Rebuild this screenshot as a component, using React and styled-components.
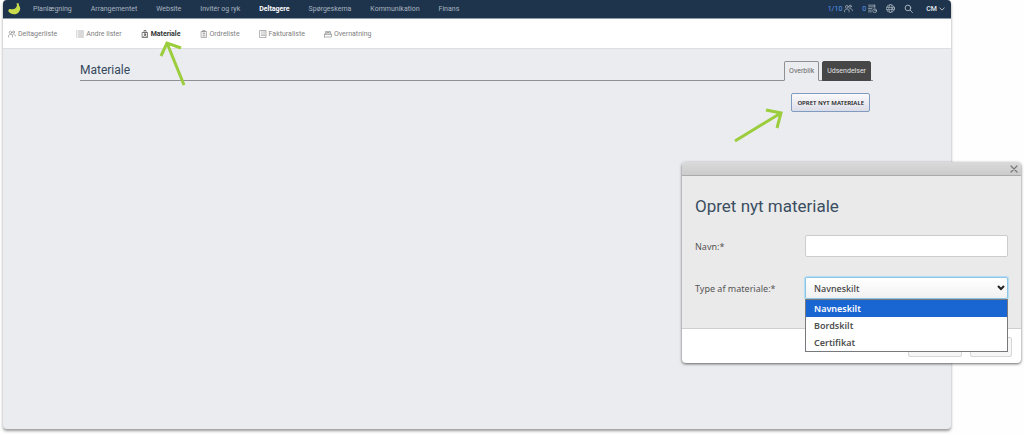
import { useState } from "react";
import styled, { createGlobalStyle } from "styled-components";

const GlobalStyle = createGlobalStyle`
  * {
    box-sizing: border-box;
  }

  body {
    margin: 0;
    background: #fefefe;
    font-family: Roboto, "Liberation Sans", sans-serif;
    color: #3c4650;
  }

  button, input, select {
    font: inherit;
    color: inherit;
  }
`;

const Stage = styled.div`
  position: relative;
  display: flex;
  min-height: 100vh;
  padding: 0 73px 6px 3px;
`;

const AppWindow = styled.div`
  display: flex;
  flex-direction: column;
  flex: 1;
  min-width: 0;
  overflow: hidden;
  background: #ebecf0;
  border-radius: 4px;
  box-shadow: 0 2px 3px rgba(0, 0, 0, 0.4);
`;

const TopBar = styled.header`
  display: flex;
  align-items: center;
  justify-content: space-between;
  height: 19px;
  padding: 0 6px 1px 5px;
  background: #1e344c;
  border-bottom: 1px solid #8d9cab;
  font-size: 7px;
  line-height: 10px;
`;

const MainNav = styled.nav`
  display: flex;
  align-items: center;
  gap: 19px;
`;

const Brand = styled.a`
  display: flex;
  padding-right: 1px;
  margin-right: -8px;
`;

const NavLink = styled.a`
  color: ${({ $active }) => ($active ? "#ffffff" : "#a9b4c0")};
  font-weight: ${({ $active }) => ($active ? 700 : 400)};
  text-decoration: none;
  white-space: nowrap;
`;

const Tools = styled.div`
  display: flex;
  align-items: center;
  gap: 9px;
  color: #b5bfca;
`;

const ToolButton = styled.button`
  display: flex;
  align-items: center;
  gap: 2px;
  padding: 0;
  border: 0;
  background: none;
  color: inherit;
`;

const Count = styled.span`
  color: #5c98f2;
`;

const UserButton = styled(ToolButton)`
  margin-left: 4px;
  font-weight: 500;
  color: #e3e7ec;
`;

const SubNav = styled.nav`
  display: flex;
  align-items: center;
  gap: 19px;
  height: 30px;
  padding: 0 5px;
  background: #ffffff;
  border-bottom: 1px solid #dcdee0;
  font-size: 7px;
  line-height: 10px;
`;

const SubNavLink = styled.a`
  display: flex;
  align-items: center;
  gap: 2px;
  color: ${({ $active }) => ($active ? "#333333" : "#808080")};
  font-weight: ${({ $active }) => ($active ? 700 : 400)};
  text-decoration: none;
  white-space: nowrap;
`;

const Content = styled.main`
  padding: 12px 78px 20px 77px;
`;

const Heading = styled.div`
  display: flex;
  align-items: flex-end;
  justify-content: space-between;
  padding-right: 2px;
  border-bottom: 1px solid #8e9094;
`;

const PageTitle = styled.h1`
  margin: 0 0 3px;
  font-size: 12px;
  font-weight: 400;
  line-height: 14px;
  color: #34495c;
`;

const Tabs = styled.div`
  display: flex;
  gap: 3px;
  margin-bottom: -1px;
`;

const Tab = styled.button`
  height: 20px;
  padding: 0 4px;
  border: 1px solid ${({ $active }) => ($active ? "#8e9094" : "#474747")};
  border-bottom-color: ${({ $active }) => ($active ? "#ebecf0" : "#474747")};
  border-radius: 2px 2px 0 0;
  background: ${({ $active }) => ($active ? "#ebecf0" : "#474747")};
  color: ${({ $active }) => ($active ? "#666666" : "#e4e4e4")};
  font-size: 7px;
`;

const Actions = styled.div`
  display: flex;
  justify-content: flex-end;
  padding: 12px 3px 0 0;
`;

const CreateButton = styled.button`
  height: 19px;
  padding: 0 5px;
  border: 1px solid #7f9cc0;
  border-radius: 2px;
  background: linear-gradient(#fafafc, #dcdce8);
  color: #222222;
  font-family: "Noto Sans", sans-serif;
  font-size: 6px;
  font-weight: 600;
`;

const Arrow = styled.svg`
  position: absolute;
  left: ${({ $left }) => $left}px;
  top: ${({ $top }) => $top}px;
  fill: none;
  stroke: #9bcd3c;
  stroke-width: 3;
  pointer-events: none;
`;

const RightArrow = styled(Arrow)`
  left: auto;
  right: 240px;
`;

const Dialog = styled.section`
  position: absolute;
  top: 162px;
  right: 3px;
  width: 339px;
  border-radius: 4px;
  background: #ffffff;
  box-shadow: 0 1px 3px rgba(0, 0, 0, 0.6);
  font-family: "Noto Sans", sans-serif;
`;

const DialogBar = styled.header`
  display: flex;
  align-items: center;
  justify-content: flex-end;
  height: 14px;
  padding-right: 3px;
  border-bottom: 1px solid #aaaaaa;
  border-radius: 4px 4px 0 0;
  background: linear-gradient(#dadada, #cbcbcb);
`;

const CloseButton = styled.button`
  display: flex;
  padding: 0;
  border: 0;
  background: none;
  color: #777777;
`;

const DialogForm = styled.form`
  padding: 18px 13px 29px;
  background: #eaeaea;
  border-bottom: 1px solid #cfcfcf;
`;

const DialogTitle = styled.h2`
  margin: 0 0 17px;
  font-family: Roboto, sans-serif;
  font-size: 17px;
  font-weight: 400;
  line-height: 24px;
  color: #3b4e61;
`;

const Field = styled.div`
  display: grid;
  grid-template-columns: 110px 1fr;
  align-items: center;
  font-size: 9px;

  & + & {
    margin-top: 20px;
  }
`;

const Label = styled.label`
  color: #555555;
`;

const TextInput = styled.input`
  width: 100%;
  height: 22px;
  padding: 0 9px;
  border: 1px solid #cccccc;
  border-radius: 2px;
  background: #ffffff;
  outline: none;
`;

const SelectWrap = styled.div`
  position: relative;
`;

const Select = styled.select`
  display: block;
  width: 100%;
  height: 22px;
  padding: 0 8px;
  appearance: none;
  border: 1px solid #8cc4e6;
  border-radius: 2px;
  background: linear-gradient(#ffffff, #f1f1f1);
  box-shadow: 0 0 1px 1px #b4dcf2;
  color: #444444;
  font-weight: 500;
  outline: none;
`;

const SelectChevron = styled.svg`
  position: absolute;
  right: 3px;
  top: 8px;
  fill: none;
  stroke: #222222;
  stroke-width: 2;
  pointer-events: none;
`;

const OptionList = styled.ul`
  position: absolute;
  top: 100%;
  left: 0;
  right: 0;
  z-index: 1;
  margin: 0;
  padding: 0;
  border: 1px solid #77797c;
  background: #ffffff;
  list-style: none;
`;

const Option = styled.li`
  padding: 0 8px;
  background: ${({ $selected }) => ($selected ? "#1965d2" : "#ffffff")};
  color: ${({ $selected }) => ($selected ? "#ffffff" : "#505050")};
  font-weight: 600;
  line-height: 17px;
  cursor: default;
`;

const DialogFooter = styled.footer`
  display: flex;
  justify-content: flex-end;
  gap: 8px;
  padding: 8px 9px 6px;
`;

const FooterButton = styled.button`
  height: 20px;
  width: ${({ $wide }) => ($wide ? 54 : 42)}px;
  padding: 0;
  border: 1px solid #d6d6d6;
  border-radius: 2px;
  background: #f6f6f6;
  color: #555555;
  font-size: 8px;
`;

const Icon = styled.svg`
  display: block;
  flex: none;
  fill: none;
  stroke: currentColor;
  stroke-width: ${({ $stroke }) => $stroke || 1.2};
  stroke-linecap: round;
  stroke-linejoin: round;
`;

function Logo() {
  return (
    <svg width="13" height="13" viewBox="0 0 26 26">
      <path
        d="M17 3L21 2L22 7C26 11 25 18 20 22C14 27 4 24 1 19C0 16 2 14 5 14C11 16 17 13 18 7Z"
        fill="#c9dc4b"
      />
    </svg>
  );
}

const icons = {
  people: (
    <>
      <circle cx="5" cy="5" r="2.5" />
      <circle cx="11" cy="4" r="2" />
      <path d="M1 14v-2c0-4 8-4 8 0v2M9 9c2-2 6-1 6 3" />
    </>
  ),
  list: (
    <path d="M5 2h10M5 6h10M5 10h10M5 14h10M1 2h1M1 6h1M1 10h1M1 14h1" />
  ),
  badge: (
    <>
      <path d="M3 5h10v10H3zM6 5V1h4v4M5 13c0-3 6-3 6 0" />
      <circle cx="8" cy="8.5" r="1.5" />
    </>
  ),
  clipboard: (
    <path d="M3 3h10v12H3zM6 1h4v3H6zM6 7h4M6 10h4M6 12h4" />
  ),
  invoice: <path d="M2 1h12v14H2zM5 4h2M9 4h3M5 8h2M9 8h3M5 11h2M9 11h3" />,
  bed: <path d="M1 14V9h14v5H1M1 9l2-3h10l2 3M3 6V3h10v3M5 6l1-1h4l1 1" />,
  orders: (
    <>
      <path d="M1 2h11M1 5h11M1 8h6M1 11h5M1 14h5M12 2v4" />
      <circle cx="12" cy="12" r="3.5" />
      <path d="M12 10v2h2" />
    </>
  ),
  globe: (
    <>
      <circle cx="8" cy="8" r="7" />
      <ellipse cx="8" cy="8" rx="3" ry="7" />
      <path d="M1 6h14M1 10h14" />
    </>
  ),
  search: (
    <>
      <circle cx="7" cy="7" r="5" />
      <path d="M11 11l4 4" />
    </>
  ),
  chevron: <path d="M2 5l6 6 6-6" />,
  close: <path d="M2 2l12 12M14 2L2 14" />,
};

function Glyph({ name, size = 8, stroke }) {
  return (
    <Icon
      width={size}
      height={size}
      viewBox="0 0 16 16"
      $stroke={stroke}
      aria-hidden="true"
    >
      {icons[name]}
    </Icon>
  );
}

const navItems = [
  "Planlægning",
  "Arrangementet",
  "Website",
  "Invitér og ryk",
  "Deltagere",
  "Spørgeskema",
  "Kommunikation",
  "Finans",
];

const subNavItems = [
  { label: "Deltagerliste", icon: "people" },
  { label: "Andre lister", icon: "list" },
  { label: "Materiale", icon: "badge" },
  { label: "Ordreliste", icon: "clipboard" },
  { label: "Fakturaliste", icon: "invoice" },
  { label: "Overnatning", icon: "bed" },
];

const materialTypes = ["Navneskilt", "Bordskilt", "Certifikat"];

function CreateDialog() {
  const [name, setName] = useState("");
  const [type, setType] = useState(materialTypes[0]);

  return (
    <Dialog role="dialog" aria-labelledby="dialog-title">
      <DialogBar>
        <CloseButton type="button" aria-label="Luk">
          <Glyph name="close" size={8} stroke={2.4} />
        </CloseButton>
      </DialogBar>
      <DialogForm>
        <DialogTitle id="dialog-title">Opret nyt materiale</DialogTitle>
        <Field>
          <Label htmlFor="name">Navn:*</Label>
          <TextInput
            id="name"
            value={name}
            onChange={(event) => setName(event.target.value)}
          />
        </Field>
        <Field>
          <Label htmlFor="type">Type af materiale:*</Label>
          <SelectWrap>
            <Select
              id="type"
              value={type}
              onChange={(event) => setType(event.target.value)}
            >
              {materialTypes.map((item) => (
                <option key={item}>{item}</option>
              ))}
            </Select>
            <SelectChevron width="8" height="6" viewBox="0 0 8 6">
              <path d="M1 1l3 3 3-3" />
            </SelectChevron>
            <OptionList role="listbox" aria-label="Type af materiale">
              {materialTypes.map((item) => (
                <Option
                  key={item}
                  role="option"
                  aria-selected={item === type}
                  $selected={item === type}
                  onClick={() => setType(item)}
                >
                  {item}
                </Option>
              ))}
            </OptionList>
          </SelectWrap>
        </Field>
      </DialogForm>
      <DialogFooter>
        <FooterButton type="button" $wide aria-label="Annuller" />
        <FooterButton type="button" aria-label="Gem" />
      </DialogFooter>
    </Dialog>
  );
}

function App() {
  return (
    <>
      <GlobalStyle />
      <Stage>
        <AppWindow>
          <TopBar>
            <MainNav>
              <Brand href="#" aria-label="Forside">
                <Logo />
              </Brand>
              {navItems.map((item) => (
                <NavLink key={item} href="#" $active={item === "Deltagere"}>
                  {item}
                </NavLink>
              ))}
            </MainNav>
            <Tools>
              <ToolButton type="button">
                <Count>1/10</Count>
                <Glyph name="people" size={9} />
              </ToolButton>
              <ToolButton type="button">
                <Count>0</Count>
                <Glyph name="orders" size={9} />
              </ToolButton>
              <ToolButton type="button" aria-label="Sprog">
                <Glyph name="globe" size={9} />
              </ToolButton>
              <ToolButton type="button" aria-label="Søg">
                <Glyph name="search" size={9} stroke={1.6} />
              </ToolButton>
              <UserButton type="button">
                CM
                <Glyph name="chevron" size={6} stroke={2} />
              </UserButton>
            </Tools>
          </TopBar>
          <SubNav>
            {subNavItems.map(({ label, icon }) => (
              <SubNavLink key={label} href="#" $active={label === "Materiale"}>
                <Glyph name={icon} />
                {label}
              </SubNavLink>
            ))}
          </SubNav>
          <Content>
            <Heading>
              <PageTitle>Materiale</PageTitle>
              <Tabs>
                <Tab type="button" $active>
                  Overblik
                </Tab>
                <Tab type="button">Udsendelser</Tab>
              </Tabs>
            </Heading>
            <Actions>
              <CreateButton type="button">OPRET NYT MATERIALE</CreateButton>
            </Actions>
          </Content>
        </AppWindow>
        <Arrow $left={158} $top={38} width="30" height="50" viewBox="0 0 30 50">
          <path d="M26 47L9 5M3 18L9 5L23 10" />
        </Arrow>
        <RightArrow $top={105} width="52" height="40" viewBox="0 0 52 40">
          <path d="M3 36L49 8M34 5L49 8L45 23" />
        </RightArrow>
        <CreateDialog />
      </Stage>
    </>
  );
}

export default App;
